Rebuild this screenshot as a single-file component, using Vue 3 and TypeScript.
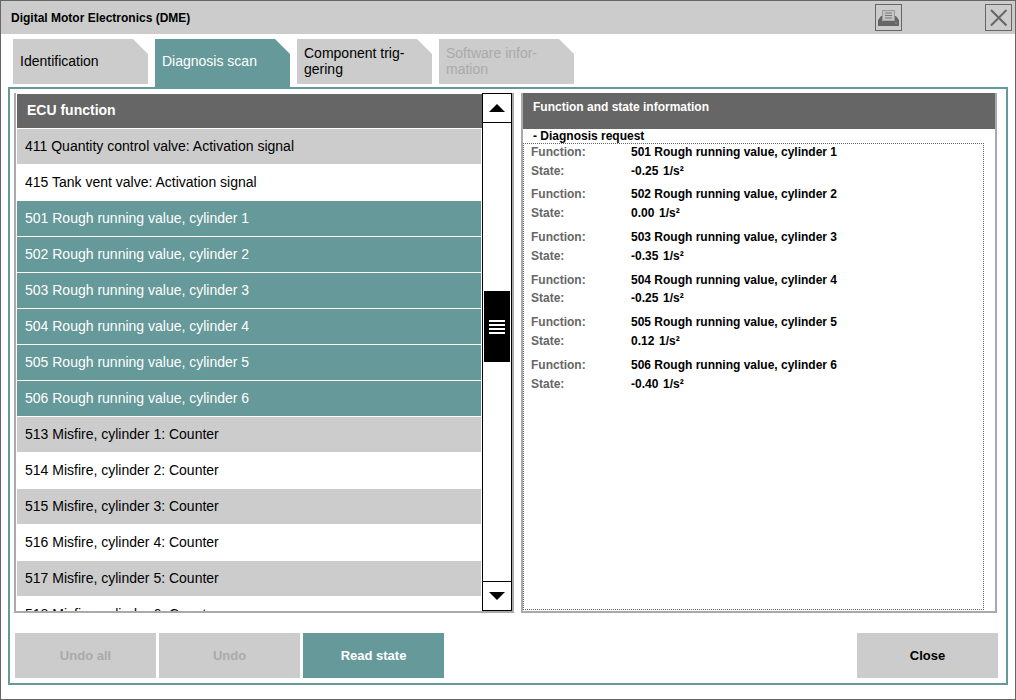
<script setup lang="ts">
interface Row { text: string; kind: 'grey' | 'plain' | 'sel' }
interface Tab { label: string; kind: 'normal' | 'active' | 'disabled' }
const tabs: Tab[] = [
  { label: 'Identification', kind: 'normal' },
  { label: 'Diagnosis scan', kind: 'active' },
  { label: 'Component trig-\ngering', kind: 'normal' },
  { label: 'Software infor-\nmation', kind: 'disabled' },
]
const rows: Row[] = [
  { text: '411 Quantity control valve: Activation signal', kind: 'grey' },
  { text: '415 Tank vent valve: Activation signal', kind: 'plain' },
  { text: '501 Rough running value, cylinder 1', kind: 'sel' },
  { text: '502 Rough running value, cylinder 2', kind: 'sel' },
  { text: '503 Rough running value, cylinder 3', kind: 'sel' },
  { text: '504 Rough running value, cylinder 4', kind: 'sel' },
  { text: '505 Rough running value, cylinder 5', kind: 'sel' },
  { text: '506 Rough running value, cylinder 6', kind: 'sel' },
  { text: '513 Misfire, cylinder 1: Counter', kind: 'grey' },
  { text: '514 Misfire, cylinder 2: Counter', kind: 'plain' },
  { text: '515 Misfire, cylinder 3: Counter', kind: 'grey' },
  { text: '516 Misfire, cylinder 4: Counter', kind: 'plain' },
  { text: '517 Misfire, cylinder 5: Counter', kind: 'grey' },
  { text: '518 Misfire, cylinder 6: Counter', kind: 'plain' },
]
const states = [
  { fn: '501 Rough running value, cylinder 1', val: '-0.25' },
  { fn: '502 Rough running value, cylinder 2', val: '0.00' },
  { fn: '503 Rough running value, cylinder 3', val: '-0.35' },
  { fn: '504 Rough running value, cylinder 4', val: '-0.25' },
  { fn: '505 Rough running value, cylinder 5', val: '0.12' },
  { fn: '506 Rough running value, cylinder 6', val: '-0.40' },
]
</script>

<template>
  <div class="window">
    <header class="titlebar">
      <span class="title">Digital Motor Electronics (DME)</span>
      <button class="icon-btn print-btn" aria-label="Print">
        <svg width="25" height="25" viewBox="0 0 25 25">
          <rect x="6.500" y="5.500" width="12" height="10" fill="#c4c4c4" stroke="#999" />
          <path d="M9 8h7M9 10.500h7M9 13h7" stroke="#777" stroke-width="1.200" />
          <path d="M5 11h1v5h13v-5h1l3 4v6H2v-6z" fill="#666" />
          <path d="M6 15.500h13" stroke="#aaa" />
          <path d="M19 18h2" stroke="#999" />
        </svg>
      </button>
      <button class="icon-btn" aria-label="Close window">
        <svg width="25" height="25" viewBox="0 0 25 25">
          <path d="M5 5l15.500 15.500M20.500 5L5 20.500" stroke="#666" stroke-width="2" fill="none" />
        </svg>
      </button>
    </header>

    <nav class="tabs">
      <div v-for="t in tabs" :key="t.label" class="tab" :class="t.kind">{{ t.label }}</div>
    </nav>

    <main class="panel">
      <div class="columns">
        <section class="left">
          <div class="list">
            <div class="list-head">ECU function</div>
            <div class="row" v-for="r in rows" :key="r.text" :class="r.kind">{{ r.text }}</div>
          </div>
          <div class="scrollbar">
            <div class="sb-btn up"><i class="tri tri-up"></i></div>
            <div class="track">
              <div class="thumb"><i></i><i></i><i></i><i></i></div>
            </div>
            <div class="sb-btn down"><i class="tri tri-down"></i></div>
          </div>
        </section>

        <section class="right">
          <div class="right-head">Function and state information</div>
          <div class="request">- Diagnosis request</div>
          <div class="info">
            <div class="group" v-for="s in states" :key="s.fn">
              <span class="lab">Function:</span><span class="val">{{ s.fn }}</span>
              <span class="lab">State:</span>
              <span class="val state"><span>{{ s.val }}</span><span>1/s²</span></span>
            </div>
          </div>
        </section>
      </div>

      <footer class="actions">
        <button class="btn off">Undo all</button>
        <button class="btn off">Undo</button>
        <button class="btn primary">Read state</button>
        <button class="btn close">Close</button>
      </footer>
    </main>
  </div>
</template>

<style scoped>
.window {
  width: 1016px;
  height: 700px;
  box-sizing: border-box;
  border: 1px solid #666;
  background: #fff;
  display: flex;
  flex-direction: column;
  font-family: "Liberation Sans", Arial, sans-serif;
  color: #000;
  overflow: hidden;
}
.titlebar {
  height: 33px;
  flex: none;
  background: #ccc;
  display: flex;
  align-items: center;
  padding: 0 3px 0 10px;
}
.title {
  font-size: 12px;
  font-weight: 700;
  flex: 1;
}
.icon-btn {
  width: 27px;
  height: 27px;
  box-sizing: border-box;
  border: 1px solid #666;
  background: #ccc;
  padding: 0;
  display: block;
}
.icon-btn svg { display: block; }
.print-btn { margin-right: 83px; }

.tabs {
  flex: none;
  height: 48px;
  margin-top: 5px;
  padding-left: 12px;
  display: flex;
  gap: 7px;
  align-items: flex-start;
}
.tab {
  width: 135px;
  height: 45px;
  box-sizing: border-box;
  background: #ccc;
  padding: 0 4px 2px 7px;
  font-size: 14px;
  line-height: 16px;
  white-space: pre-line;
  display: flex;
  align-items: center;
  clip-path: polygon(0 0, 120px 0, 135px 15px, 135px 100%, 0 100%);
}
.tab.active {
  height: 48px;
  background: #699;
  color: #fff;
  padding-bottom: 5px;
}
.tab.disabled { color: #aaa; }

.panel {
  flex: none;
  height: 598px;
  margin: 0 7px;
  box-sizing: border-box;
  border: 2px solid #699;
  padding: 4px 8px 5px 4px;
  display: flex;
  flex-direction: column;
}
.columns {
  height: 520px;
  flex: none;
  display: flex;
  gap: 7px;
}
.left {
  width: 500px;
  box-sizing: border-box;
  border-left: 2px solid #aaa;
  border-right: 2px solid #aaa;
  border-bottom: 2px solid #aaa;
  display: flex;
  overflow: hidden;
}
.list {
  width: 465px;
  margin: 1px 0 0 1px;
  overflow: hidden;
  flex: none;
}
.list-head {
  height: 34px;
  margin-bottom: 1px;
  background: #666;
  color: #fff;
  font-size: 14px;
  font-weight: 700;
  line-height: 33px;
  padding-left: 10px;
}
.row {
  width: 456px;
  height: 35px;
  margin-bottom: 1px;
  padding-left: 8px;
  font-size: 14px;
  line-height: 35px;
  white-space: nowrap;
}
.row.grey { background: #ccc; }
.row.sel { background: #699; color: #fff; }

.scrollbar {
  width: 30px;
  flex: none;
  box-sizing: border-box;
  border: 1px solid #000;
  display: flex;
  flex-direction: column;
  background: #fff;
}
.sb-btn {
  height: 28px;
  flex: none;
  display: flex;
  align-items: center;
  justify-content: center;
}
.sb-btn.up { border-bottom: 1px solid #000; }
.sb-btn.down { border-top: 1px solid #000; }
.tri {
  display: block;
  width: 0;
  height: 0;
  border-left: 8px solid transparent;
  border-right: 8px solid transparent;
}
.tri-up { border-bottom: 8px solid #000; }
.tri-down { border-top: 8px solid #000; }
.track {
  flex: 1;
  padding: 168px 1px 0;
}
.thumb {
  width: 26px;
  height: 71px;
  background: #000;
  display: flex;
  flex-direction: column;
  align-items: center;
  justify-content: center;
  gap: 2px;
}
.thumb i {
  display: block;
  width: 16px;
  height: 2px;
  background: #fff;
}

.right {
  width: 476px;
  box-sizing: border-box;
  border-left: 2px solid #aaa;
  border-right: 2px solid #aaa;
  border-bottom: 2px solid #aaa;
  display: flex;
  flex-direction: column;
}
.right-head {
  height: 36px;
  flex: none;
  background: #666;
  color: #fff;
  font-size: 12px;
  font-weight: 700;
  line-height: 28px;
  padding-left: 10px;
}
.request {
  height: 14px;
  flex: none;
  font-size: 12px;
  font-weight: 700;
  line-height: 14px;
  padding-left: 10px;
}
.info {
  width: 461px;
  height: 467px;
  box-sizing: border-box;
  border: 1px dotted #666;
  padding-left: 7px;
  flex: none;
}
.group {
  display: grid;
  grid-template-columns: 100px 1fr;
  grid-auto-rows: 18.8px;
  margin-bottom: 5.05px;
  font-size: 12px;
  font-weight: 700;
  line-height: 19px;
}
.group:first-child { margin-top: -1.3px; }
.lab { color: #666; }
.state { display: flex; gap: 4.7px; }

.actions {
  margin-top: 20px;
  display: flex;
  gap: 3px;
  padding-left: 1px;
}
.btn {
  width: 141px;
  height: 45px;
  border: 0;
  padding: 0;
  font-family: inherit;
  font-size: 13px;
  font-weight: 700;
  background: #ccc;
  color: #000;
}
.btn.off { color: #aaa; }
.btn.primary { background: #699; color: #fff; }
.btn.close { margin-left: auto; }
</style>

<style>
html, body { margin: 0; background: #fff; }
</style>
